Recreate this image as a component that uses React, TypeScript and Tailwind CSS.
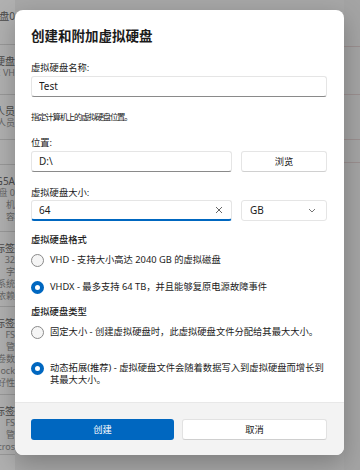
import React, { useState } from 'react';

const bgRows = [
  { h: 45, lines: ['磁盘0'] },
  { h: 50, lines: ['硬盘', 'E VH'] },
  { h: 45, lines: ['人员', '人员'] },
  { h: 25, lines: [] },
  { h: 67, lines: ['G5A', '盘 0', '机', '容'] },
  { h: 75, lines: ['标签', '32', '字', '系统', '依赖'] },
  { h: 88, lines: ['标签', 'FS', '管', '卷数', 'ock', '好性'] },
  { h: 60, lines: ['标签', 'FS', '管', 'cros'] },
];

const Radio: React.FC<{ checked: boolean; onClick: () => void }> = ({ checked, onClick }) => (
  <button
    onClick={onClick}
    className={`w-[13px] h-[13px] shrink-0 rounded-full ${
      checked ? 'border-[4px] border-[#0067c0] bg-white' : 'border border-[#8a8a8a] bg-[#f5f5f5]'
    }`}
  />
);

const App: React.FC = () => {
  const [format, setFormat] = useState('vhdx');
  const [kind, setKind] = useState('dynamic');
  const [name, setName] = useState('Test');
  const [size, setSize] = useState('64');

  const font = { fontFamily: '"Noto Sans", "Noto Sans CJK SC", sans-serif' };

  return (
    <div className="relative w-[360px] h-[470px] overflow-hidden bg-[#a7a7a7]" style={font}>
      {/* dimmed window behind the dialog */}
      <div className="flex h-full">
        <div className="w-[15px] flex flex-col bg-[#b0b0b0]">
          {bgRows.map((r, i) => (
            <div key={i} className="flex flex-col border-b border-[#989898] pt-[10px]" style={{ height: r.h }}>
              {r.lines.map((t, j) => (
                <div
                  key={j}
                  className={`flex justify-end overflow-hidden whitespace-nowrap leading-[12px] ${
                    j === 0 ? 'text-[10px] text-[#4a4a4a]' : 'text-[9px] text-[#666]'
                  }`}
                >
                  {t}
                </div>
              ))}
            </div>
          ))}
        </div>
        <div className="flex-1" />
        <div className="w-[16px] flex flex-col bg-[#a4a4a4]">
          <div className="h-[47px] border-b border-[#9a8f8f]" />
          <div className="h-[48px] border-b border-[#9a8f8f]" />
          <div className="h-[45px] border-b border-[#9a8f8f]" />
          <div className="h-[23px] border-b border-[#9a8f8f]" />
          <div className="flex-1" />
        </div>
      </div>

      {/* dialog */}
      <div className="absolute left-[15px] top-[10px] w-[329px] h-[445px] bg-white rounded-[8px] shadow-[0_8px_24px_rgba(0,0,0,0.25)] flex flex-col overflow-hidden text-[#1b1b1b]">
        <div className="flex-1 flex flex-col pl-[16px] pr-[17px]">
          <h1 className="mt-[17px] text-[13.5px] leading-[18px] font-semibold">创建和附加虚拟硬盘</h1>

          <div className="mt-[17px] text-[9.3px] leading-[12px]">虚拟硬盘名称:</div>
          <div className="mt-[2px] h-[21px] rounded-[3px] border border-[#e5e5e5] border-b-[#8a8a8a] flex items-center px-[7px]">
            <input
              value={name}
              onChange={e => setName(e.target.value)}
              className="w-full outline-none text-[10px] bg-transparent"
            />
          </div>

          <div className="mt-[14px] text-[8.4px] tracking-[-1.2px] leading-[12px]">指定计算机上的虚拟硬盘位置。</div>

          <div className="mt-[14px] text-[9.3px] leading-[12px]">位置:</div>
          <div className="mt-[2px] flex gap-[9px]">
            <div className="w-[201px] h-[21px] rounded-[3px] border border-[#e5e5e5] border-b-[#8a8a8a] flex items-center px-[7px] text-[10px]">
              D:\
            </div>
            <button className="flex-1 h-[21px] rounded-[3px] border border-[#e5e5e5] border-b-[#d0d0d0] text-[9.3px]">
              浏览
            </button>
          </div>

          <div className="mt-[15px] text-[9.3px] leading-[12px]">虚拟硬盘大小:</div>
          <div className="mt-[1px] flex gap-[9px]">
            <div className="w-[201px] h-[21px] rounded-[3px] border border-[#e5e5e5] border-b-2 border-b-[#0067c0] flex items-center pl-[7px] pr-[8px]">
              <input
                value={size}
                onChange={e => setSize(e.target.value)}
                className="w-full outline-none text-[10px] bg-transparent caret-black"
              />
              <svg width="8" height="8" viewBox="0 0 8 8" className="shrink-0">
                <path d="M1 1L7 7M7 1L1 7" stroke="#555" strokeWidth="0.9" />
              </svg>
            </div>
            <div className="flex-1 h-[21px] rounded-[3px] border border-[#e5e5e5] flex items-center justify-between pl-[8px] pr-[10px] text-[10px]">
              <span>GB</span>
              <svg width="8" height="5" viewBox="0 0 8 5">
                <path d="M1 1L4 4L7 1" stroke="#666" strokeWidth="0.9" fill="none" />
              </svg>
            </div>
          </div>

          <div className="mt-[13px] text-[9.3px] leading-[12px] font-medium">虚拟硬盘格式</div>
          <div className="mt-[7px] flex items-center gap-[6px] h-[14px] text-[9.3px]">
            <Radio checked={format === 'vhd'} onClick={() => setFormat('vhd')} />
            <span>VHD - 支持大小高达 2040 GB 的虚拟磁盘</span>
          </div>
          <div className="mt-[13px] flex items-center gap-[6px] h-[14px] text-[9.3px]">
            <Radio checked={format === 'vhdx'} onClick={() => setFormat('vhdx')} />
            <span>VHDX - 最多支持 64 TB，并且能够复原电源故障事件</span>
          </div>

          <div className="mt-[12px] text-[9.3px] leading-[12px] font-medium">虚拟硬盘类型</div>
          <div className="mt-[7px] flex items-center gap-[6px] h-[14px] text-[9.3px]">
            <Radio checked={kind === 'fixed'} onClick={() => setKind('fixed')} />
            <span className="whitespace-nowrap">固定大小 - 创建虚拟硬盘时，此虚拟硬盘文件分配给其最大大小。</span>
          </div>
          <div className="mt-[23px] flex items-start gap-[6px] text-[9.3px] leading-[12px]">
            <Radio checked={kind === 'dynamic'} onClick={() => setKind('dynamic')} />
            <span>动态拓展(推荐) - 虚拟硬盘文件会随着数据写入到虚拟硬盘而增长到其最大大小。</span>
          </div>
        </div>

        <div className="h-[53px] shrink-0 bg-[#f3f3f3] border-t border-[#e8e8e8] flex items-start gap-[8px] pl-[16px] pr-[17px] pt-[16px]">
          <button className="flex-1 h-[21px] rounded-[3px] bg-[#0067c0] text-white text-[9.3px]">创建</button>
          <button className="flex-1 h-[21px] rounded-[3px] bg-white border border-[#e2e2e2] border-b-[#cfcfcf] text-[9.3px]">
            取消
          </button>
        </div>
      </div>
    </div>
  );
};

export default App;
